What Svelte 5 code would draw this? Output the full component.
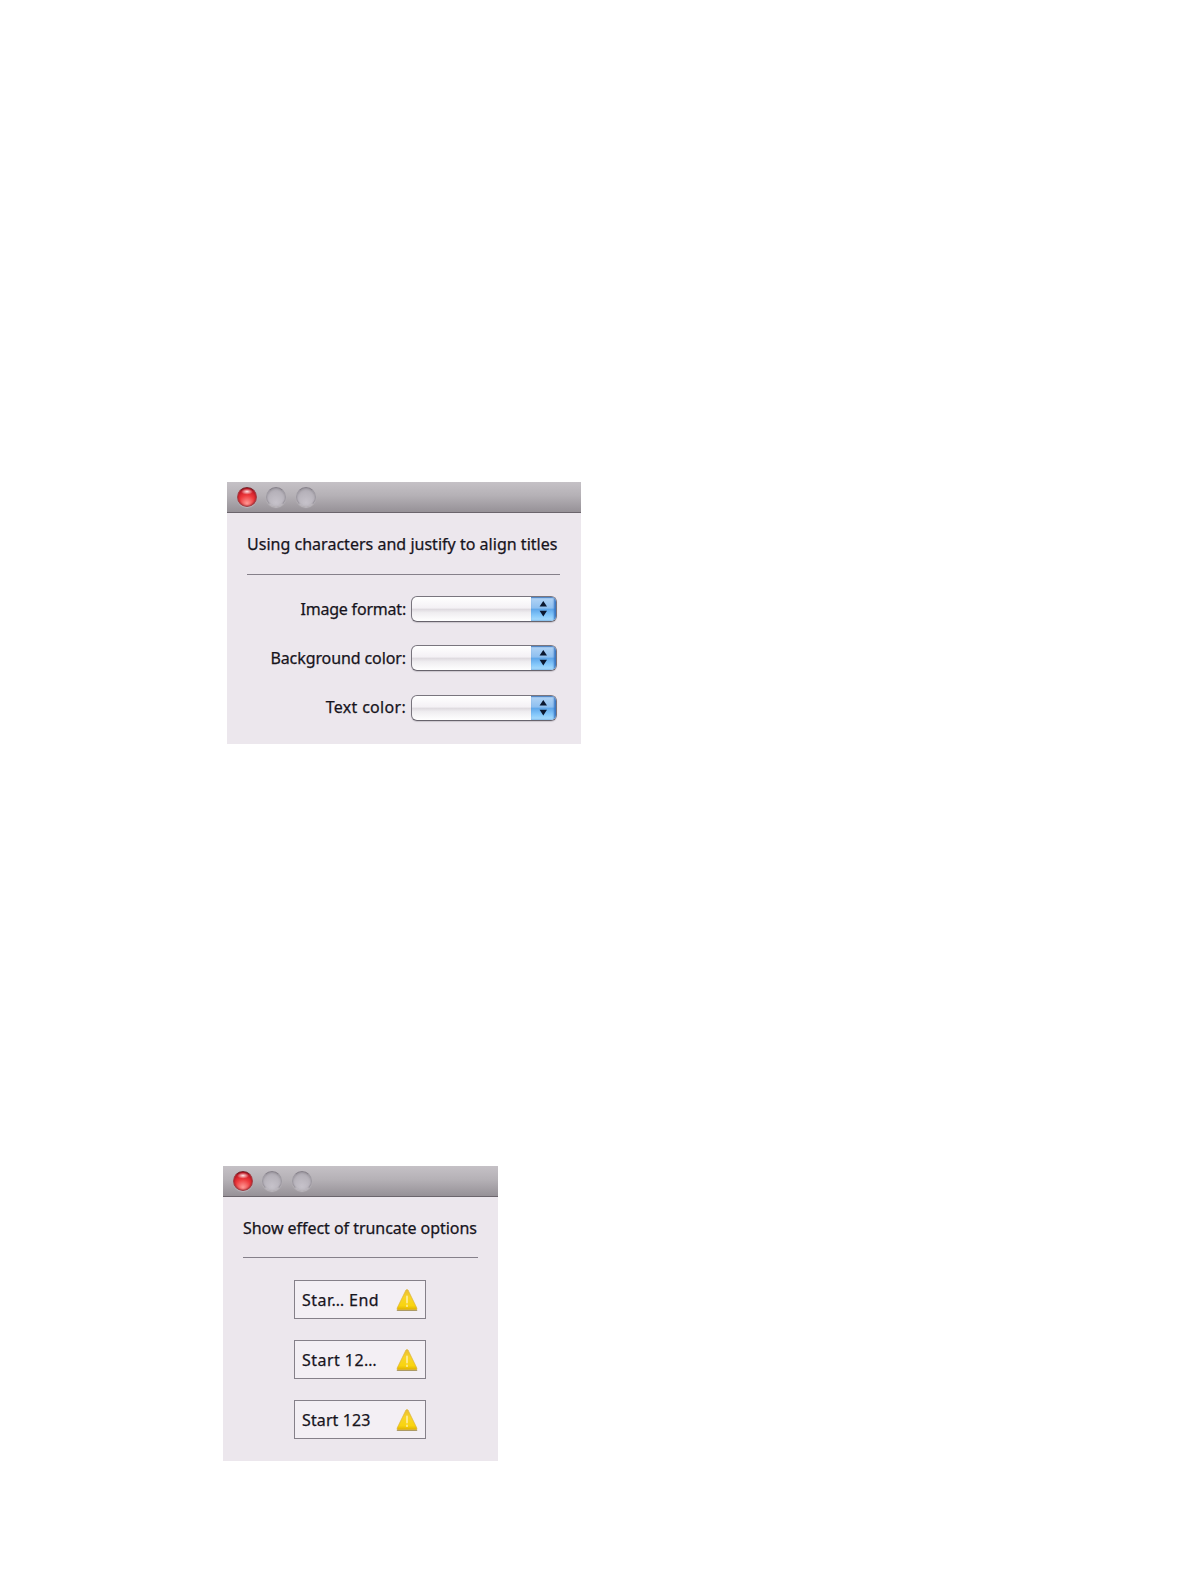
<script>
  const formats = [
    { text: 'Image format:', kind: 'snug' },
    { text: 'Background color:', kind: 'even' },
    { text: 'Text color:', kind: 'wide' },
  ];
  const samples = [
    { text: 'Star… End', kind: 'loose' },
    { text: 'Start 12…', kind: 'loose' },
    { text: 'Start 123', kind: 'plain' },
  ];
</script>

{#snippet titlebar()}
  <header class="titlebar">
    <span class="light red"></span>
    <span class="light"></span>
    <span class="light"></span>
  </header>
{/snippet}

<main>
  <section class="window align">
    {@render titlebar()}
    <h1>Using characters and justify to align titles</h1>
    <hr />
    <div class="fields">
      {#each formats as { text, kind }}
        <div class="field">
          <span class="label {kind}">{text}</span>
          <div class="popup">
            <span class="stepper">
              <svg viewBox="0 0 25 24" width="25" height="24">
                <path d="M12.3 4 16 9.6H8.6Z M12.3 19.4 16 13.8H8.6Z" fill="#0b1830" />
              </svg>
            </span>
          </div>
        </div>
      {/each}
    </div>
  </section>

  <section class="window truncate">
    {@render titlebar()}
    <h1>Show effect of truncate options</h1>
    <hr />
    <div class="boxes">
      {#each samples as { text, kind }}
        <div class="box">
          <span class="sample {kind}">{text}</span>
          <svg viewBox="0 0 22 24" width="22" height="24">
            <defs>
              <linearGradient id="gold" x1="0" y1="0" x2="0" y2="1">
                <stop offset="0" stop-color="#e9bd32" />
                <stop offset="0.4" stop-color="#f8d426" />
                <stop offset="0.8" stop-color="#f9d40e" />
                <stop offset="1" stop-color="#dfb000" />
              </linearGradient>
            </defs>
            <path d="M1.5 22.2H20.5" stroke="#a7986c" stroke-width="1.6" stroke-linecap="round" />
            <path d="M9.9 2.2Q11 .8 12.1 2.2L20.8 20Q21.4 21.7 19.9 21.7H2.1Q.6 21.7 1.2 20Z" fill="url(#gold)" stroke="#dbb333" stroke-width=".7" />
            <path d="M11 8.5V14.5M11 17.4V18.2" stroke="#fdeb9a" stroke-width="1.8" stroke-linecap="round" />
          </svg>
        </div>
      {/each}
    </div>
  </section>
</main>

<style>
  :global(body) {
    background: #fff;
  }
  main {
    box-sizing: border-box;
    height: 1584px;
    padding: 482px 0 0 223px;
    display: flex;
    flex-direction: column;
    gap: 422px;
    font: 16px/22px 'Noto Sans', 'Open Sans', sans-serif;
    color: #17141c;
    -webkit-text-stroke: 0.25px #17141c;
  }
  .window {
    box-sizing: border-box;
    background: #ece7ed;
    display: flex;
    flex-direction: column;
  }
  .align {
    width: 354px;
    height: 262px;
    margin-left: 4px;
  }
  .truncate {
    width: 275px;
    height: 295px;
  }
  .titlebar {
    box-sizing: border-box;
    height: 31px;
    flex: none;
    display: flex;
    gap: 9.5px;
    padding: 5px 0 0 9.5px;
    background: linear-gradient(#c5c1c6, #b5b1b6 45%, #969197);
    border-bottom: 1.5px solid #6b656c;
  }
  .light {
    box-sizing: border-box;
    width: 20px;
    height: 20px;
    border-radius: 50%;
    border: 1px solid #9d99a1;
    border-top-color: #86818a;
    border-bottom-color: #bbb7be;
    background: radial-gradient(circle at 50% 80%, #c6c2ca, #b3afb7 75%);
    box-shadow: inset 0 1px 2px #98949c, 0 1px 1px #bcb8be;
  }
  .red {
    border-color: #a23b41;
    border-top-color: #742329;
    background:
      radial-gradient(ellipse 6px 3px at 50% 20%, #ffe5e5, transparent),
      radial-gradient(circle at 50% 85%, #ff9a96, #ee3a3c 45%, #c31624 80%);
    box-shadow: inset 0 0 2px #941620, 0 1px 1px #bcb8be;
  }
  h1 {
    margin: 20px 0 0 20px;
    font: inherit;
    letter-spacing: 0.02px;
    white-space: nowrap;
    flex: none;
  }
  .truncate h1 {
    letter-spacing: -0.04px;
  }
  hr {
    width: 313px;
    height: 1px;
    flex: none;
    margin: 19px 0 0 20px;
    border: 0;
    background: #85808a;
  }
  .truncate hr {
    width: 235px;
    margin-top: 18px;
  }
  .fields {
    display: flex;
    flex-direction: column;
    gap: 23.3px;
    margin: 21px 24px 0 0;
  }
  .field {
    display: flex;
    justify-content: flex-end;
    align-items: center;
    gap: 5px;
    height: 26px;
    white-space: nowrap;
  }
  .label {
    padding-bottom: 1px;
  }
  .snug {
    letter-spacing: -0.2px;
  }
  .even {
    letter-spacing: -0.1px;
  }
  .wide {
    letter-spacing: 0.3px;
  }
  .loose {
    letter-spacing: 0.45px;
  }
  .plain {
    letter-spacing: 0.12px;
  }
  .popup {
    box-sizing: border-box;
    width: 146px;
    height: 26px;
    border: 1.5px solid #79757e;
    border-bottom-color: #67636c;
    border-radius: 6px;
    overflow: hidden;
    display: flex;
    justify-content: flex-end;
    background: linear-gradient(#fff, #f4f1f5 45%, #dfdbe0 52%, #efedf0 65%, #fff);
    box-shadow: 0 1px 1px #cbc6cd;
  }
  .stepper {
    width: 25px;
    height: 24px;
    background: linear-gradient(#b4d5f5, #8fc0f0 45%, #61a8ea 52%, #82c6fa 75%, #acdffe);
    box-shadow: inset -2px 0 2px #3976c3, inset 0 1px 1px #5488c4;
  }
  .stepper svg {
    display: block;
  }
  .boxes {
    display: flex;
    flex-direction: column;
    gap: 21px;
    margin: 22px 0 0 71px;
  }
  .box {
    box-sizing: border-box;
    width: 132px;
    height: 39px;
    border: 1px solid #858089;
    background: #f3eff4;
    display: flex;
    align-items: center;
    justify-content: space-between;
    padding: 0 7px;
    white-space: nowrap;
  }
  .sample {
    padding-top: 1px;
  }
</style>
